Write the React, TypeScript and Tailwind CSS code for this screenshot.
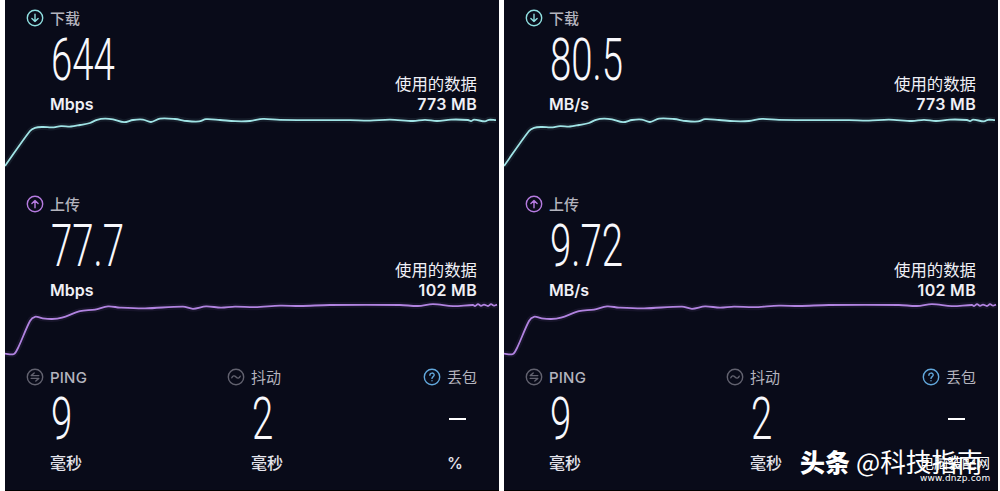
import type { ReactNode } from 'react';

type Point = [number, number];

interface Reading {
    value: string;
    used: string;
}

interface PanelProps {
    unit: string;
    download: Reading;
    upload: Reading;
}

const DOWNLOAD_POINTS: Point[] = [
    [0, 52], [25, 17], [30, 13.8], [38, 13], [47, 13.4], [56, 12.2], [66, 12.5], [75, 11], [85, 9],
    [92, 5.8], [100, 4.6], [108, 5.4], [119, 8.2], [128, 6], [138, 5.6], [146, 8], [155, 4.6],
    [170, 5], [182, 7], [194, 7.4], [201, 5.2], [215, 6], [230, 7.2], [245, 7], [258, 4.8],
    [275, 5.8], [345, 6.2], [365, 6.6], [385, 5.6], [408, 7], [420, 5.8], [432, 7], [446, 5.6],
    [463, 6], [466, 7.2], [469, 5.6], [480, 7.4], [484, 5.8], [491, 6.2],
];

const UPLOAD_POINTS: Point[] = [
    [0, 53.6], [9, 54], [13, 48], [25, 21], [30, 16.8], [37, 18.2], [47, 19], [57, 17.6], [75, 11.2],
    [90, 9.6], [103, 6.4], [115, 7.6], [140, 8.4], [178, 6.6], [188, 8.8], [201, 6.4], [216, 7.6],
    [230, 6.6], [250, 7.2], [275, 5.6], [295, 6], [325, 5], [395, 5], [413, 6], [428, 4.2],
    [448, 6.2], [468, 5], [470, 6], [473, 4.2], [476, 5.8], [479, 4.6], [483, 6], [486, 4.2],
    [489, 5.6], [492, 4.6],
];

// Catmull-Rom spline through the samples
function toPath(points: Point[]) {
    let d = `M${points[0][0]} ${points[0][1]}`;
    for (let i = 0; i < points.length - 1; i++) {
        const p0 = points[Math.max(i - 1, 0)];
        const p1 = points[i];
        const p2 = points[i + 1];
        const p3 = points[Math.min(i + 2, points.length - 1)];
        const dx = (p2[0] - p1[0]) / 3;
        const m1 = (p2[1] - p0[1]) / (p2[0] - p0[0]);
        const m2 = (p3[1] - p1[1]) / (p3[0] - p1[0]);
        d += ` C${p1[0] + dx} ${p1[1] + m1 * dx} ${p2[0] - dx} ${p2[1] - m2 * dx} ${p2[0]} ${p2[1]}`;
    }
    return d;
}

function RoundIcon({ className, children }: { className: string; children: ReactNode }) {
    return (
        <svg
            className={`h-[18px] w-[18px] shrink-0 ${className}`}
            viewBox="0 0 18 18"
            fill="none"
            stroke="currentColor"
            strokeWidth="1.4"
            strokeLinecap="round"
            strokeLinejoin="round"
        >
            <circle cx="9" cy="9" r="7.7" />
            {children}
        </svg>
    );
}

function Heading({ icon, label }: { icon: ReactNode; label: string }) {
    return (
        <div className="flex h-9 items-center gap-1.5 text-[15px] leading-5 font-[450] text-[#b4b4be]">
            {icon}
            <span className="pt-0.5">{label}</span>
        </div>
    );
}

function BigNumber({ children }: { children: ReactNode }) {
    return (
        <div className="h-[47px] origin-left scale-x-[0.65] whitespace-nowrap font-[Roboto] text-[59px] leading-[47px] font-light text-[#f8f8fc]">
            {children}
        </div>
    );
}

function Chart({ points, className }: { points: Point[]; className: string }) {
    const d = toPath(points);
    return (
        <div className={className}>
            <svg className="block h-[60px] w-[494px]" viewBox="0 0 494 60" fill="none" stroke="currentColor">
                <path d={d} strokeWidth="6" opacity="0.08" />
                <path d={d} strokeWidth="1.8" strokeLinejoin="round" />
            </svg>
        </div>
    );
}

function Transfer({ icon, label, unit, reading }: { icon: ReactNode; label: string; unit: string; reading: Reading }) {
    return (
        <div className="pr-[22px] pl-[21px]">
            <Heading icon={icon} label={label} />
            <div className="flex h-[78px] justify-between pl-[25px] text-[16px] leading-5 font-semibold text-[#f0f0f6]">
                <div className="flex flex-col justify-between">
                    <BigNumber>{reading.value}</BigNumber>
                    <div className="-ml-px">{unit}</div>
                </div>
                <div className="flex flex-col justify-end text-right">
                    <div className="text-[16.4px] font-normal">使用的数据</div>
                    <div className="tracking-[0.3px]">{reading.used}</div>
                </div>
            </div>
        </div>
    );
}

function Stat({ icon, label, unit, children }: { icon: ReactNode; label: ReactNode; unit: string; children: ReactNode }) {
    return (
        <div>
            <div className="flex h-9 items-center gap-1.5 text-[15px] leading-5 text-[#b4b4be]">
                {icon}
                <span className="pt-0.5">{label}</span>
            </div>
            <div className="flex h-[78px] flex-col justify-between pl-[25px]">
                {children}
                <div className="-ml-px text-[16px] leading-5 font-medium text-[#e4e4ec]">{unit}</div>
            </div>
        </div>
    );
}

function Panel({ unit, download, upload }: PanelProps) {
    return (
        <section className="h-full w-[494px] shrink-0 overflow-hidden border-b border-black bg-[#090b19]">
            <Transfer
                label="下载"
                unit={unit}
                reading={download}
                icon={
                    <RoundIcon className="text-[#8fdfe0]">
                        <path d="M9 5.2v7.4M5.9 9.6 9 12.6l3.1-3" />
                    </RoundIcon>
                }
            />
            <Chart points={DOWNLOAD_POINTS} className="h-[72px] text-[#a0e4e6]" />
            <Transfer
                label="上传"
                unit={unit}
                reading={upload}
                icon={
                    <RoundIcon className="text-[#b67be0]">
                        <path d="M9 12.8V5.4M5.900 8.400 9 5.400l3.100 3" />
                    </RoundIcon>
                }
            />
            <Chart points={UPLOAD_POINTS} className="h-[59px] text-[#b183e0]" />
            <div className="grid grid-cols-[201px_196px_1fr] pl-[21px]">
                <Stat
                    label={<span className="font-medium tracking-[0.2px]">PING</span>}
                    unit="毫秒"
                    icon={
                        <RoundIcon className="text-[#62626f]">
                            <path d="M12.800 7.600H5.200L8.200 5M5.200 10.400h7.600l-3 2.600" />
                        </RoundIcon>
                    }
                >
                    <BigNumber>9</BigNumber>
                </Stat>
                <Stat
                    label="抖动"
                    unit="毫秒"
                    icon={
                        <RoundIcon className="text-[#62626f]">
                            <path d="M4.800 9.800c.8-2.200 2.600-2.600 4.200-.8s3.400 1.400 4.200-.8" />
                        </RoundIcon>
                    }
                >
                    <BigNumber>2</BigNumber>
                </Stat>
                <Stat
                    label="丢包"
                    unit="%"
                    icon={
                        <RoundIcon className="text-[#62a8dc]">
                            <path d="M6.900 7.200c0-2.800 4.300-2.800 4.300-.2 0 1.600-2.200 1.600-2.200 3.400M9 12.700v.1" />
                        </RoundIcon>
                    }
                >
                    <div className="flex h-[47px] items-center pt-px pl-px">
                        <div className="h-[2.5px] w-[17px] bg-white" />
                    </div>
                </Stat>
            </div>
        </section>
    );
}

export default function App() {
    return (
        <main className="relative flex h-[491px] w-[1000px] gap-[5px] overflow-hidden bg-white pl-[5px] font-[Inter,'Noto_Sans_CJK_SC',sans-serif]">
            <Panel
                unit="Mbps"
                download={{ value: '644', used: '773 MB' }}
                upload={{ value: '77.7', used: '102 MB' }}
            />
            <Panel
                unit="MB/s"
                download={{ value: '80.5', used: '773 MB' }}
                upload={{ value: '9.72', used: '102 MB' }}
            />

            {/* Watermarks */}
            <div className="absolute top-[443px] left-[800px] flex items-center gap-1.5 whitespace-nowrap font-['Noto_Sans_CJK_SC',sans-serif] text-[25px] leading-9 text-white">
                <span className="font-black">头条</span>
                <span className="text-[25.6px] font-normal">@科技指南</span>
            </div>
            <div className="absolute top-[454px] left-[920px] whitespace-nowrap text-white">
                <div className="font-['Noto_Sans_CJK_SC',sans-serif] text-[14px] leading-4">电脑装配网</div>
                <div className="font-['DejaVu_Sans',sans-serif] text-[9px] leading-4 tracking-[0.2px]">www.dnzp.com</div>
            </div>
        </main>
    );
}
